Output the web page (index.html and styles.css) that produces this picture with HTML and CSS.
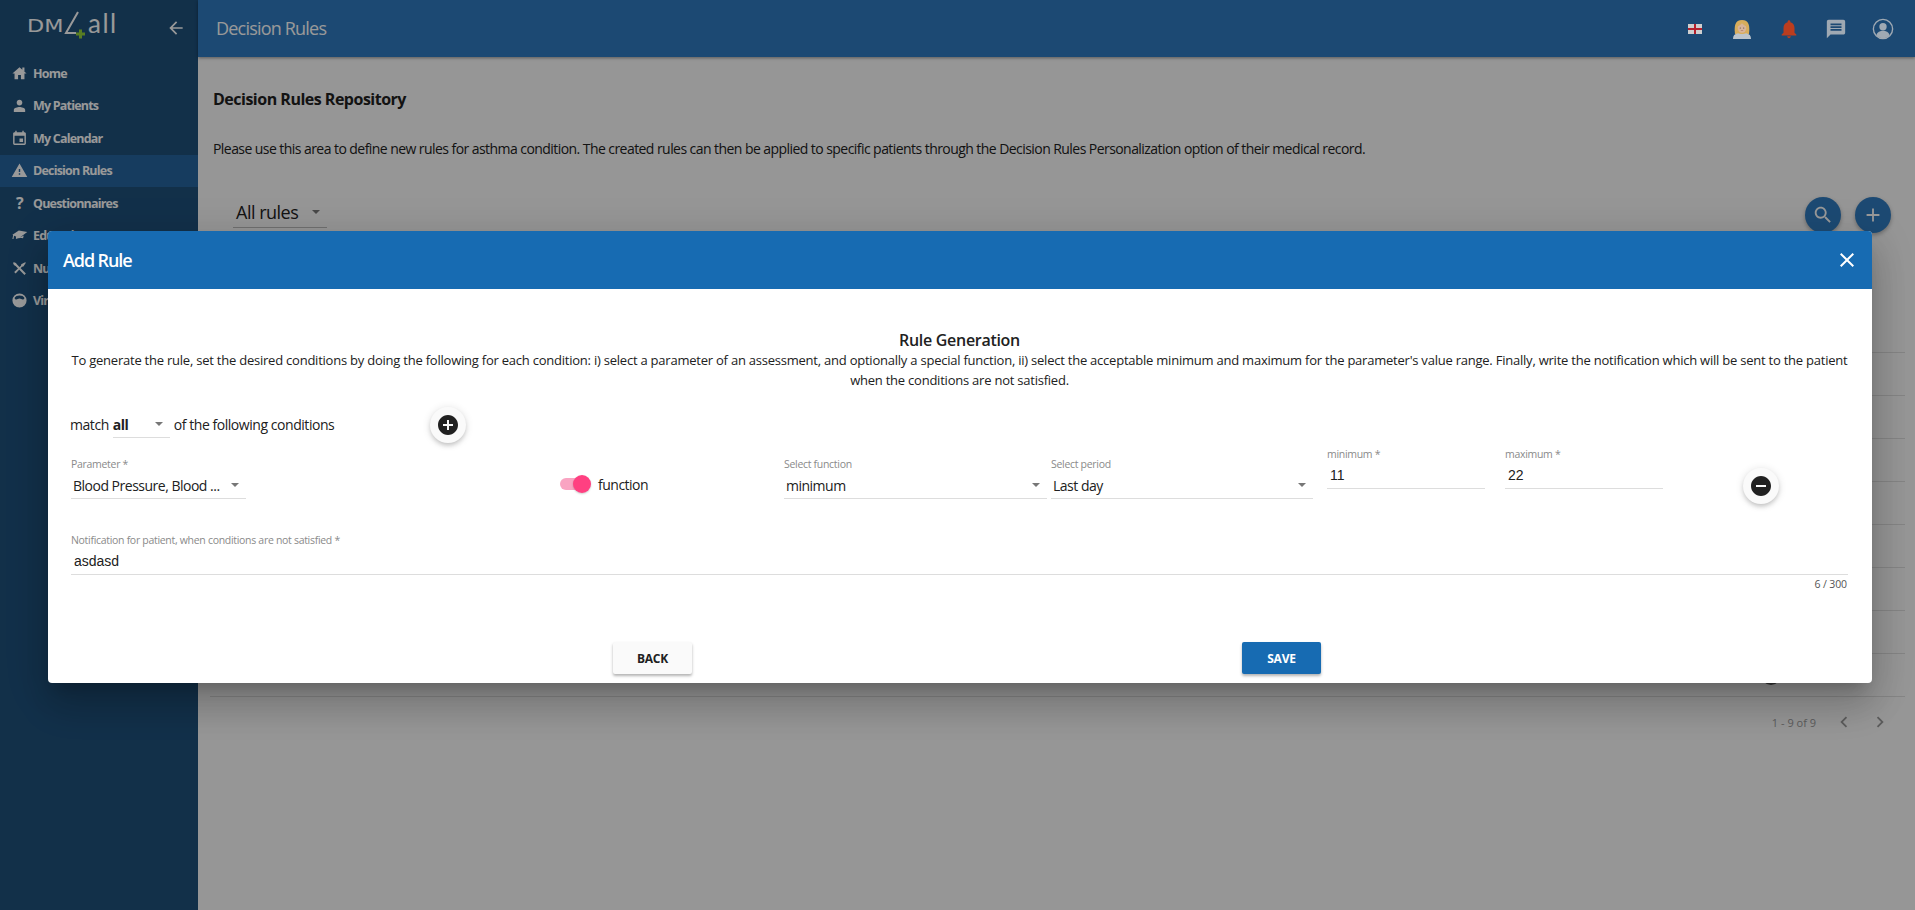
FILE: index.html
```html
<!DOCTYPE html>
<html>
<head>
    <title>Decision Rules</title>
    <link rel="stylesheet" href="styles.css">
</head>
<body>
    <div class="app">
        <aside class="sidebar">
            <div class="brand">
                <div class="logo">
                    <span class="logo-dm">DM</span>
                    <svg class="logo-mark" viewBox="0 0 24 24"><path d="M14 1 2 22h10" fill="none" stroke="#fff" stroke-width="2"/><path d="M15 18.500h3v3h3v3h-3v3h-3v-3h-3v-3h3z" fill="#93d13a"/></svg>
                    <span class="logo-all">all</span>
                </div>
                <svg class="back-icon" viewBox="0 0 24 24"><path d="M20 11H7.830l5.590-5.590L12 4l-8 8 8 8 1.410-1.410L7.830 13H20v-2z"/></svg>
            </div>
            <nav>
                <a class="nav-item"><svg viewBox="0 0 24 24"><path d="M10 20v-6h4v6h5v-8h3L12 3 2 12h3v8zM16 3.500h3v6l-3-2.700z"/></svg><span>Home</span></a>
                <a class="nav-item"><svg viewBox="0 0 24 24"><path d="M12 12c2.210 0 4-1.790 4-4s-1.790-4-4-4-4 1.790-4 4 1.790 4 4 4zm0 2c-2.670 0-8 1.340-8 4v3h16v-3c0-2.660-5.330-4-8-4z"/></svg><span>My Patients</span></a>
                <a class="nav-item"><svg viewBox="0 0 24 24"><path d="M17 12h-5v5h5v-5zM16 1v2H8V1H6v2H5c-1.110 0-1.990.9-1.990 2L3 19c0 1.100.89 2 2 2h14c1.100 0 2-.9 2-2V5c0-1.100-.9-2-2-2h-1V1h-2zm3 18H5V8h14v11z"/></svg><span>My Calendar</span></a>
                <a class="nav-item active"><svg viewBox="0 0 24 24"><path d="M1 21h22L12 2 1 21zm12-3h-2v-2h2v2zm0-4h-2v-4h2v4z"/></svg><span>Decision Rules</span></a>
                <a class="nav-item"><span class="nav-glyph">?</span><span>Questionnaires</span></a>
                <a class="nav-item"><svg viewBox="0 0 24 24"><path d="M7 13.500v3.500c3-1.500 7-1.500 10-1l1-4-6 3zM23 7 11 5 2 11l1 .5L2 17h1.500l.8-4.800L12 15z"/></svg><span>Education</span></a>
                <a class="nav-item"><svg viewBox="0 0 24 24"><path d="M4 3c2 0 4 1.500 4.500 3.500L21 19l-2 2L6.500 8.500C4.500 8 3 6 3 4zM20 3l1 1-3.500 5-2 .5-9 9.500-2-2 9.500-9 .5-2z"/></svg><span>Nutrition</span></a>
                <a class="nav-item"><svg viewBox="0 0 24 24"><path d="M12 2a10 10 0 1 0 0 20 10 10 0 0 0 0-20zm0 3c3 0 6 1.200 7 3.400-.6 1.500-1.500 2.300-2.500 2.300-1.500 0-2.500-1.400-4.500-1.400s-3 1.400-4.500 1.400c-1 0-1.900-.8-2.500-2.300C6 6.200 9 5 12 5z"/></svg><span>Virtual Coach</span></a>
            </nav>
        </aside>

        <div class="page">
            <header class="topbar">
                <span class="topbar-title">Decision Rules</span>
                <div class="topbar-icons">
                    <svg class="flag" viewBox="0 0 14 10"><rect width="14" height="10" fill="#cfcfcf"/><path d="M6 0h2v10H6zM0 4h14v2H0z" fill="#b5202c"/></svg>
                    <svg class="avatar" viewBox="0 0 20 20"><path d="M3 15C2 7 3 1 10 1s8 6 7 14z" fill="#d8ad5c"/><ellipse cx="10" cy="9" rx="4.300" ry="4.800" fill="#d9b49a"/><path d="M5.500 7.500c2-.8 3.500-2 4.500-3.500 1 1.500 2.500 2.700 4.500 3.500 0-3-1.500-5-4.500-5s-4.500 2-4.500 5z" fill="#d8ad5c"/><circle cx="8.300" cy="9" r=".6" fill="#5a4a40"/><circle cx="11.700" cy="9" r=".6" fill="#5a4a40"/><path d="M8.800 11.500h2.400" stroke="#a8705c" stroke-width=".6"/><path d="M1 20c0-3.500 1.500-5.300 5-5.800 2 1 6 1 8 0 3.500.5 5 2.300 5 5.800z" fill="#bcc4cc"/></svg>
                    <svg class="top-icon bell" viewBox="0 0 24 24"><path d="M12 22c1.100 0 2-.9 2-2h-4c0 1.100.89 2 2 2zm6-6v-5c0-3.070-1.640-5.640-4.500-6.320V4c0-.83-.67-1.500-1.500-1.500s-1.500.67-1.500 1.500v.68C7.630 5.360 6 7.920 6 11v5l-2 2v1h16v-1l-2-2z"/></svg>
                    <svg class="top-icon" viewBox="0 0 24 24"><path d="M20 2H4c-1.100 0-1.990.9-1.990 2L2 22l4-4h14c1.100 0 2-.9 2-2V4c0-1.100-.9-2-2-2zm-2 12H6v-2h12v2zm0-3H6V9h12v2zm0-3H6V6h12v2z"/></svg>
                    <svg class="top-icon" viewBox="0 0 24 24"><circle cx="12" cy="12" r="10.500" fill="none" stroke="currentColor" stroke-width="1.500"/><circle cx="12" cy="9.500" r="4"/><path d="M4.800 18.500c1-3 4-4.500 7.200-4.500s6.200 1.500 7.200 4.500C17.500 20.800 15 22 12 22s-5.500-1.200-7.200-3.500z"/></svg>
                </div>
            </header>

            <main class="content">
                <h2 class="repo-title">Decision Rules Repository</h2>
                <p class="repo-text">Please use this area to define new rules for asthma condition. The created rules can then be applied to specific patients through the Decision Rules Personalization option of their medical record.</p>
                <div class="rules-bar">
                    <div class="rules-filter">All rules<span class="caret"></span></div>
                    <div class="rules-actions">
                        <button class="round-btn"><svg viewBox="0 0 24 24"><path d="M15.500 14h-.79l-.28-.27C15.410 12.590 16 11.110 16 9.500 16 5.910 13.090 3 9.500 3S3 5.910 3 9.500 5.910 16 9.500 16c1.610 0 3.090-.59 4.230-1.570l.27.28v.79l5 4.990L20.490 19l-4.990-5zm-6 0C7.010 14 5 11.990 5 9.500S7.010 5 9.500 5 14 7.010 14 9.500 11.990 14 9.500 14z"/></svg></button>
                        <button class="round-btn"><svg viewBox="0 0 24 24"><path d="M19 13h-6v6h-2v-6H5v-2h6V5h2v6h6v2z"/></svg></button>
                    </div>
                </div>
                <div class="rules-table">
                    <div class="rule-row"></div>
                    <div class="rule-row"></div>
                    <div class="rule-row"></div>
                    <div class="rule-row"></div>
                    <div class="rule-row"></div>
                    <div class="rule-row"></div>
                    <div class="rule-row"></div>
                    <div class="rule-row"></div>
                    <div class="rule-row"><span class="row-action"></span></div>
                </div>
                <div class="pager">
                    <span class="pager-text">1 - 9 of 9</span>
                    <svg viewBox="0 0 24 24"><path d="M15.410 7.410 14 6l-6 6 6 6 1.410-1.410L10.830 12z"/></svg>
                    <svg viewBox="0 0 24 24"><path d="M10 6 8.590 7.410 13.170 12l-4.580 4.590L10 18l6-6z"/></svg>
                </div>
            </main>
        </div>
    </div>

    <div class="backdrop">
        <div class="modal">
            <div class="modal-head">
                <span class="modal-title">Add Rule</span>
                <svg class="modal-close" viewBox="0 0 24 24"><path d="M19 6.410 17.590 5 12 10.590 6.410 5 5 6.410 10.590 12 5 17.590 6.410 19 12 13.410 17.590 19 19 17.590 13.410 12z"/></svg>
            </div>
            <div class="modal-body">
                <h3 class="gen-title">Rule Generation</h3>
                <p class="gen-text">To generate the rule, set the desired conditions by doing the following for each condition: i) select a parameter of an assessment, and optionally a special function, ii) select the acceptable minimum and maximum for the parameter's value range. Finally, write the notification which will be sent to the patient when the conditions are not satisfied.</p>

                <div class="match-row">
                    <span>match</span>
                    <div class="match-select"><b>all</b><span class="caret"></span></div>
                    <span>of the following conditions</span>
                    <button class="fab add-fab"><svg viewBox="0 0 24 24"><path d="M12 2C6.480 2 2 6.480 2 12s4.480 10 10 10 10-4.480 10-10S17.520 2 12 2zm5 11h-4v4h-2v-4H7v-2h4V7h2v4h4v2z"/></svg></button>
                </div>

                <div class="condition-row">
                    <div class="field param-field">
                        <label>Parameter *</label>
                        <div class="field-value">Blood Pressure, Blood ...<span class="caret"></span></div>
                    </div>
                    <div class="toggle-wrap">
                        <span class="toggle"><span class="toggle-knob"></span></span>
                        <span>function</span>
                    </div>
                    <div class="field fn-field">
                        <label>Select function</label>
                        <div class="field-value">minimum<span class="caret"></span></div>
                    </div>
                    <div class="field fn-field">
                        <label>Select period</label>
                        <div class="field-value">Last day<span class="caret"></span></div>
                    </div>
                    <div class="field num-field">
                        <label>minimum *</label>
                        <div class="field-value num">11</div>
                    </div>
                    <div class="field num-field">
                        <label>maximum *</label>
                        <div class="field-value num">22</div>
                    </div>
                    <button class="fab remove-fab"><svg viewBox="0 0 24 24"><path d="M12 2C6.480 2 2 6.480 2 12s4.480 10 10 10 10-4.480 10-10S17.520 2 12 2zm5 11H7v-2h10v2z"/></svg></button>
                </div>

                <div class="field note-field">
                    <label>Notification for patient, when conditions are not satisfied *</label>
                    <div class="field-value num">asdasd</div>
                    <div class="counter">6 / 300</div>
                </div>

                <div class="modal-foot">
                    <button class="btn btn-back">BACK</button>
                    <button class="btn btn-save">SAVE</button>
                </div>
            </div>
        </div>
    </div>
</body>
</html>
```

FILE: styles.css
```css
* {
    box-sizing: border-box;
}
body {
    margin: 0;
    font-family: "Open Sans", Arial, sans-serif;
    color: #212121;
    overflow: hidden;
}
svg {
    display: block;
    fill: currentColor;
}
button {
    font-family: inherit;
    border: none;
    padding: 0;
}
.app {
    display: flex;
    height: 100vh;
    background-color: #fafafa;
}

/* sidebar */
.sidebar {
    width: 198px;
    flex-shrink: 0;
    background-color: #1e507b;
    color: #fff;
}
.brand {
    height: 57px;
    display: flex;
    align-items: flex-start;
    padding: 11px 12px 0 27px;
    justify-content: space-between;
}
.logo {
    display: flex;
    align-items: flex-end;
    height: 24px;
}
.logo-dm {
    font-family: "DejaVu Sans", sans-serif;
    font-size: 18px;
    line-height: 18px;
    width: 37px;
    transform: scaleX(1.24);
    transform-origin: left;
}
.logo-mark {
    width: 24px;
    height: 24px;
    overflow: visible;
}
.logo-all {
    font-family: "Lato", sans-serif;
    font-size: 26px;
    letter-spacing: 1.5px;
    line-height: 24px;
}
.back-icon {
    width: 20px;
    height: 20px;
    margin-top: 7px;
}
.nav-item {
    height: 32.5px;
    display: flex;
    align-items: center;
    padding-left: 11px;
    font-size: 12.500px;
    font-weight: 700;
    letter-spacing: -0.8px;
    gap: 5px;
}
.nav-item svg,
.nav-glyph {
    width: 17px;
    height: 17px;
    flex-shrink: 0;
}
.nav-glyph {
    font-size: 16px;
    line-height: 17px;
    text-align: center;
}
.nav-item.active {
    background-color: #25649e;
}

/* top bar */
.page {
    flex: 1;
    min-width: 0;
    display: flex;
    flex-direction: column;
}
.topbar {
    height: 57px;
    flex-shrink: 0;
    display: flex;
    align-items: center;
    justify-content: space-between;
    padding: 0 21px 0 18px;
    background-color: #2f7bc0;
    box-shadow: 0 1px 3px rgba(0, 0, 0, 0.4);
    color: #fff;
}
.topbar-title {
    font-size: 18px;
    letter-spacing: -0.8px;
    margin-top: -2px;
}
/* these keep their colour over the backdrop */
.topbar-icons {
    display: flex;
    align-items: center;
    gap: 25px;
    position: relative;
    z-index: 2;
    color: #9fa9b3;
}
.flag {
    width: 14px;
    height: 10px;
    margin: 0 4px;
}
.avatar {
    width: 20px;
    height: 20px;
    margin: 0 1px;
}
.top-icon {
    width: 22px;
    height: 22px;
}
.bell {
    color: #bb3d1e;
}

/* content behind the dialog */
.content {
    flex: 1;
    padding: 0 10px 0 15px;
}
.repo-title {
    margin: 32px 0 0;
    font-size: 16px;
    line-height: 20px;
    font-weight: 700;
    letter-spacing: -0.5px;
}
.repo-text {
    margin: 30px 0 0;
    font-size: 14px;
    line-height: 20px;
    letter-spacing: -0.56px;
}
.rules-bar {
    display: flex;
    justify-content: space-between;
    margin-top: 37px;
    padding-left: 20px;
}
.rules-filter {
    width: 94px;
    height: 32px;
    font-size: 18px;
    line-height: 24px;
    letter-spacing: -0.5px;
    border-bottom: 1px solid #bbb;
    display: flex;
    align-items: center;
    padding-left: 3px;
    gap: 14px;
}
.rules-actions {
    display: flex;
    gap: 14px;
    margin-right: 14px;
    margin-top: 1px;
    height: 36px;
}
.round-btn {
    width: 36px;
    height: 36px;
    border-radius: 50%;
    background-color: #2f7bc0;
    color: #fff;
    display: flex;
    align-items: center;
    justify-content: center;
    box-shadow: 0 2px 4px rgba(0, 0, 0, 0.3);
}
.round-btn svg {
    width: 22px;
    height: 22px;
}
.rules-table {
    margin-top: 77px;
    margin-left: -3px;
}
.rule-row {
    height: 43px;
    border-bottom: 1px solid #ddd;
    display: flex;
    justify-content: flex-end;
    align-items: center;
    padding-right: 124px;
}
.row-action {
    width: 20px;
    height: 20px;
    border-radius: 50%;
    background-color: #555;
}
.pager {
    display: flex;
    justify-content: flex-end;
    align-items: center;
    height: 50px;
    font-size: 11px;
    color: #999;
    padding-right: 14px;
}
.pager-text {
    margin-right: 3px;
}
.pager svg {
    width: 22px;
    height: 22px;
    margin-left: 14px;
}

/* dialog */
.backdrop {
    position: fixed;
    inset: 0;
    z-index: 1;
    background-color: rgba(0, 0, 0, 0.4);
}
.modal {
    position: absolute;
    left: 48px;
    top: 231px;
    width: 1824px;
    height: 452px;
    background-color: #fff;
    border-radius: 4px;
    overflow: hidden;
}
.backdrop::after {
    content: "";
    position: absolute;
    left: 48px;
    top: 231px;
    width: 1824px;
    height: 452px;
    border-radius: 4px;
    box-shadow: 0 11px 15px -7px rgba(0, 0, 0, 0.2), 0 24px 38px 3px rgba(0, 0, 0, 0.14), 0 9px 46px 8px rgba(0, 0, 0, 0.12);
    pointer-events: none;
}
.modal-head {
    height: 58px;
    background-color: #176bb2;
    color: #fff;
    display: flex;
    align-items: center;
    justify-content: space-between;
    padding: 0 13px 0 15px;
}
.modal-title {
    font-size: 18px;
    font-weight: 600;
    letter-spacing: -1.1px;
}
.modal-close {
    width: 24px;
    height: 24px;
}
.modal-body {
    padding: 41px 24px 0 23px;
}
.gen-title {
    margin: 0;
    text-align: center;
    font-size: 16px;
    line-height: 20px;
    font-weight: 600;
    letter-spacing: -0.3px;
}
.gen-text {
    margin: 1px 0 0;
    text-align: center;
    font-size: 13px;
    line-height: 19.500px;
    letter-spacing: -0.228px;
}
.match-row {
    display: flex;
    align-items: center;
    height: 37px;
    margin-top: 16px;
    font-size: 14px;
    letter-spacing: -0.45px;
    margin-left: -1px;
}
.match-select {
    width: 57px;
    height: 26px;
    margin: 0 4px 0 4px;
    border-bottom: 1px solid #ddd;
    display: flex;
    align-items: center;
    justify-content: space-between;
    padding-right: 7px;
}
.add-fab {
    margin-left: 96px;
}
.fab {
    width: 36px;
    height: 36px;
    border-radius: 50%;
    background-color: #fafafa;
    color: #212121;
    display: flex;
    align-items: center;
    justify-content: center;
    box-shadow: 0 3px 5px -1px rgba(0, 0, 0, 0.2), 0 1px 8px 0 rgba(0, 0, 0, 0.12);
}
.fab svg {
    width: 24px;
    height: 24px;
}
.condition-row {
    display: grid;
    grid-template-columns: 489px 224px 267px 276px 178px 238px 36px;
    align-items: start;
    margin-top: 4px;
}
.field label {
    display: block;
    font-size: 10.500px;
    line-height: 14px;
    color: #8a8a8a;
    letter-spacing: -0.3px;
}
.field-value {
    display: flex;
    align-items: center;
    justify-content: space-between;
    height: 28px;
    font-size: 14px;
    letter-spacing: -0.5px;
    border-bottom: 1px solid #ddd;
    padding: 1px 7px 0 2px;
}
.field-value.num {
    font-family: "Liberation Sans", Arial, sans-serif;
    font-size: 14px;
    letter-spacing: 0;
    padding-left: 3px;
}
.param-field {
    width: 175px;
    margin-top: 10px;
}
.fn-field {
    width: 263px;
    margin-top: 10px;
}
.fn-field:nth-child(4) {
    width: 262px;
}
.num-field {
    width: 158px;
}
.toggle-wrap {
    display: flex;
    align-items: center;
    gap: 7px;
    height: 18px;
    margin-top: 28px;
    font-size: 14px;
    letter-spacing: -0.5px;
}
.toggle {
    display: block;
    position: relative;
    width: 31px;
    height: 12px;
}
.toggle::before {
    content: "";
    display: block;
    width: 26px;
    height: 12px;
    border-radius: 6px;
    background-color: #f9a4c2;
}
.toggle-knob {
    position: absolute;
    right: 0;
    top: -3px;
    width: 18px;
    height: 18px;
    border-radius: 50%;
    background-color: #ff4081;
    box-shadow: 0 1px 2px rgba(0, 0, 0, 0.2);
}
.remove-fab {
    margin-top: 21px;
}
.note-field {
    margin-top: 29px;
}
.counter {
    text-align: right;
    font-size: 10.500px;
    line-height: 18px;
    color: #555;
    letter-spacing: -0.1px;
    padding-right: 1px;
}
.modal-foot {
    display: flex;
    gap: 550px;
    margin-top: 49px;
    padding-left: 542px;
}
.btn {
    width: 79px;
    height: 32px;
    border-radius: 2px;
    font-size: 12px;
    font-weight: 700;
    letter-spacing: -0.2px;
    box-shadow: 0 2px 3px rgba(0, 0, 0, 0.3);
}
.btn-back {
    background-color: #fafafa;
    color: #212121;
}
.btn-save {
    background-color: #176bb2;
    color: #fff;
}
.caret {
    width: 0;
    height: 0;
    border-left: 4px solid transparent;
    border-right: 4px solid transparent;
    border-top: 4px solid #777;
    flex-shrink: 0;
}
```
